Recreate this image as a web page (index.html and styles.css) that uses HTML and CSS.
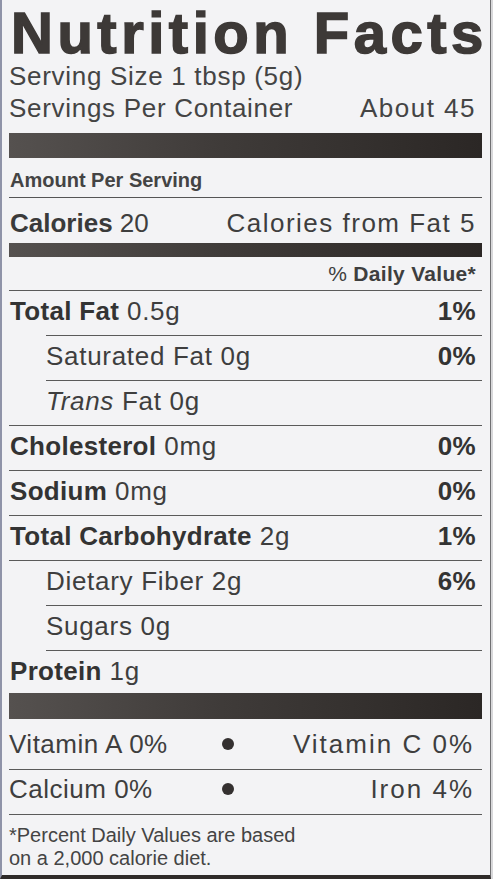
FILE: index.html
```html
<!DOCTYPE html>
<html lang="en">
<head>
    <meta charset="UTF-8">
    <meta name="viewport" content="width=device-width, initial-scale=1.0">
    <title>Nutrition Facts</title>
    <link rel="stylesheet" href="styles.css">
</head>
<body>
    <div class="label">
        <h1 class="title">Nutrition Facts</h1>

        <div class="serving">Serving Size 1 tbsp (5g)</div>
        <div class="serving split">
            <span>Servings Per Container</span>
            <span class="wide">About 45</span>
        </div>

        <div class="bar bar-top"></div>

        <div class="amount">Amount Per Serving</div>

        <div class="calories split">
            <span><b>Calories</b> 20</span>
            <span class="wide">Calories from Fat 5</span>
        </div>

        <div class="bar bar-mid"></div>

        <div class="daily">% <b>Daily Value*</b></div>
        <div class="rule"></div>

        <!-- nutrients -->
        <div class="row"><span><b>Total Fat</b> 0.5g</span><b>1%</b></div>
        <div class="rule sub"></div>
        <div class="row sub"><span>Saturated Fat 0g</span><b>0%</b></div>
        <div class="rule sub"></div>
        <div class="row sub"><span><i>Trans</i> Fat 0g</span></div>
        <div class="rule"></div>
        <div class="row"><span><b>Cholesterol</b> 0mg</span><b>0%</b></div>
        <div class="rule"></div>
        <div class="row"><span><b>Sodium</b> 0mg</span><b>0%</b></div>
        <div class="rule"></div>
        <div class="row"><span><b>Total Carbohydrate</b> 2g</span><b>1%</b></div>
        <div class="rule"></div>
        <div class="row sub"><span>Dietary Fiber 2g</span><b>6%</b></div>
        <div class="rule sub"></div>
        <div class="row sub"><span>Sugars 0g</span></div>
        <div class="rule sub"></div>
        <div class="row protein"><span><b>Protein</b> 1g</span></div>

        <div class="bar bar-bottom"></div>

        <!-- vitamins -->
        <div class="vit vit-first">
            <span class="vit-left">Vitamin A 0%</span>
            <span class="dot"></span>
            <span class="vit-right">Vitamin C 0%</span>
        </div>
        <div class="rule"></div>
        <div class="vit vit-second">
            <span class="vit-left">Calcium 0%</span>
            <span class="dot"></span>
            <span class="vit-right">Iron 4%</span>
        </div>
        <div class="rule"></div>

        <p class="footnote">*Percent Daily Values are based<br>on a 2,000 calorie diet.</p>
    </div>
</body>
</html>
```

FILE: styles.css
```css
/* Nutrition label */
body {
    margin: 0;
    padding: 0;
    background-color: #d8d8da;
    font-family: 'Liberation Sans', Arial, sans-serif;
    color: #3e3e3e;
}

.label {
    box-sizing: border-box;
    width: 491px;
    height: 879px;
    overflow: hidden;
    padding: 0 8px 0 7px;
    background-color: #f3f3f5;
    border-left: 2px solid #8f93a8;
    border-right: 1px solid #707072;
    border-bottom: 4px solid #2f2b29;
}

.title {
    margin: 5px 0 0 2px;
    font-size: 58px;
    line-height: 55px;
    font-weight: 700;
    letter-spacing: 4.5px;
    white-space: nowrap;
    color: #3d3937;
    -webkit-text-stroke: 1.5px #3d3937;
}

.split {
    display: flex;
    justify-content: space-between;
    align-items: baseline;
}

.wide {
    letter-spacing: 1.5px;
}

.serving {
    font-size: 26px;
    line-height: 32px;
    letter-spacing: 0.7px;
    padding-right: 6px;
    color: #444;
}

.bar {
    background: linear-gradient(90deg, #55514f 0%, #3f3b39 45%, #2b2725 100%);
}

.bar-top {
    margin-top: 9px;
    height: 25px;
}

.bar-mid {
    height: 14px;
}

.bar-bottom {
    margin-top: 8px;
    height: 26px;
}

.amount {
    font-size: 20px;
    line-height: 24px;
    font-weight: 700;
    padding: 10px 0 5px 1px;
    border-bottom: 1px solid #555;
    color: #444;
}

.calories {
    font-size: 26px;
    line-height: 28px;
    padding: 11px 6px 6px 1px;
}

.calories b {
    color: #3a3a3a;
}

.daily {
    text-align: right;
    font-size: 21px;
    line-height: 24px;
    letter-spacing: 0.3px;
    padding: 5px 6px 4px 0;
}

.rule {
    height: 1px;
    background-color: #5a5a5a;
}

.rule.sub {
    margin-left: 37px;
}

.row {
    display: flex;
    justify-content: space-between;
    align-items: baseline;
    height: 28px;
    padding: 6px 6px 10px 1px;
    font-size: 26px;
    line-height: 28px;
    letter-spacing: 0.7px;
}

.row.sub {
    margin-left: 37px;
    padding-left: 0;
}

.row b {
    color: #333;
    letter-spacing: 0.3px;
}

.row.protein {
    padding-bottom: 0;
}

.vit {
    display: flex;
    align-items: center;
    font-size: 26px;
    line-height: 30px;
}

.vit-first {
    padding: 10px 0;
}

.vit-second {
    padding: 4px 0 10px;
}

.vit-left {
    width: 202px;
    letter-spacing: 0.5px;
}

.dot {
    width: 12px;
    height: 12px;
    margin: 0 11px;
    border-radius: 50%;
    background-color: #343030;
}

.vit-right {
    flex: 1;
    text-align: right;
    padding-right: 8px;
    letter-spacing: 2px;
}

.footnote {
    margin: 0;
    padding: 9px 0 0 0;
    font-size: 20px;
    line-height: 23px;
    color: #444;
}
```
